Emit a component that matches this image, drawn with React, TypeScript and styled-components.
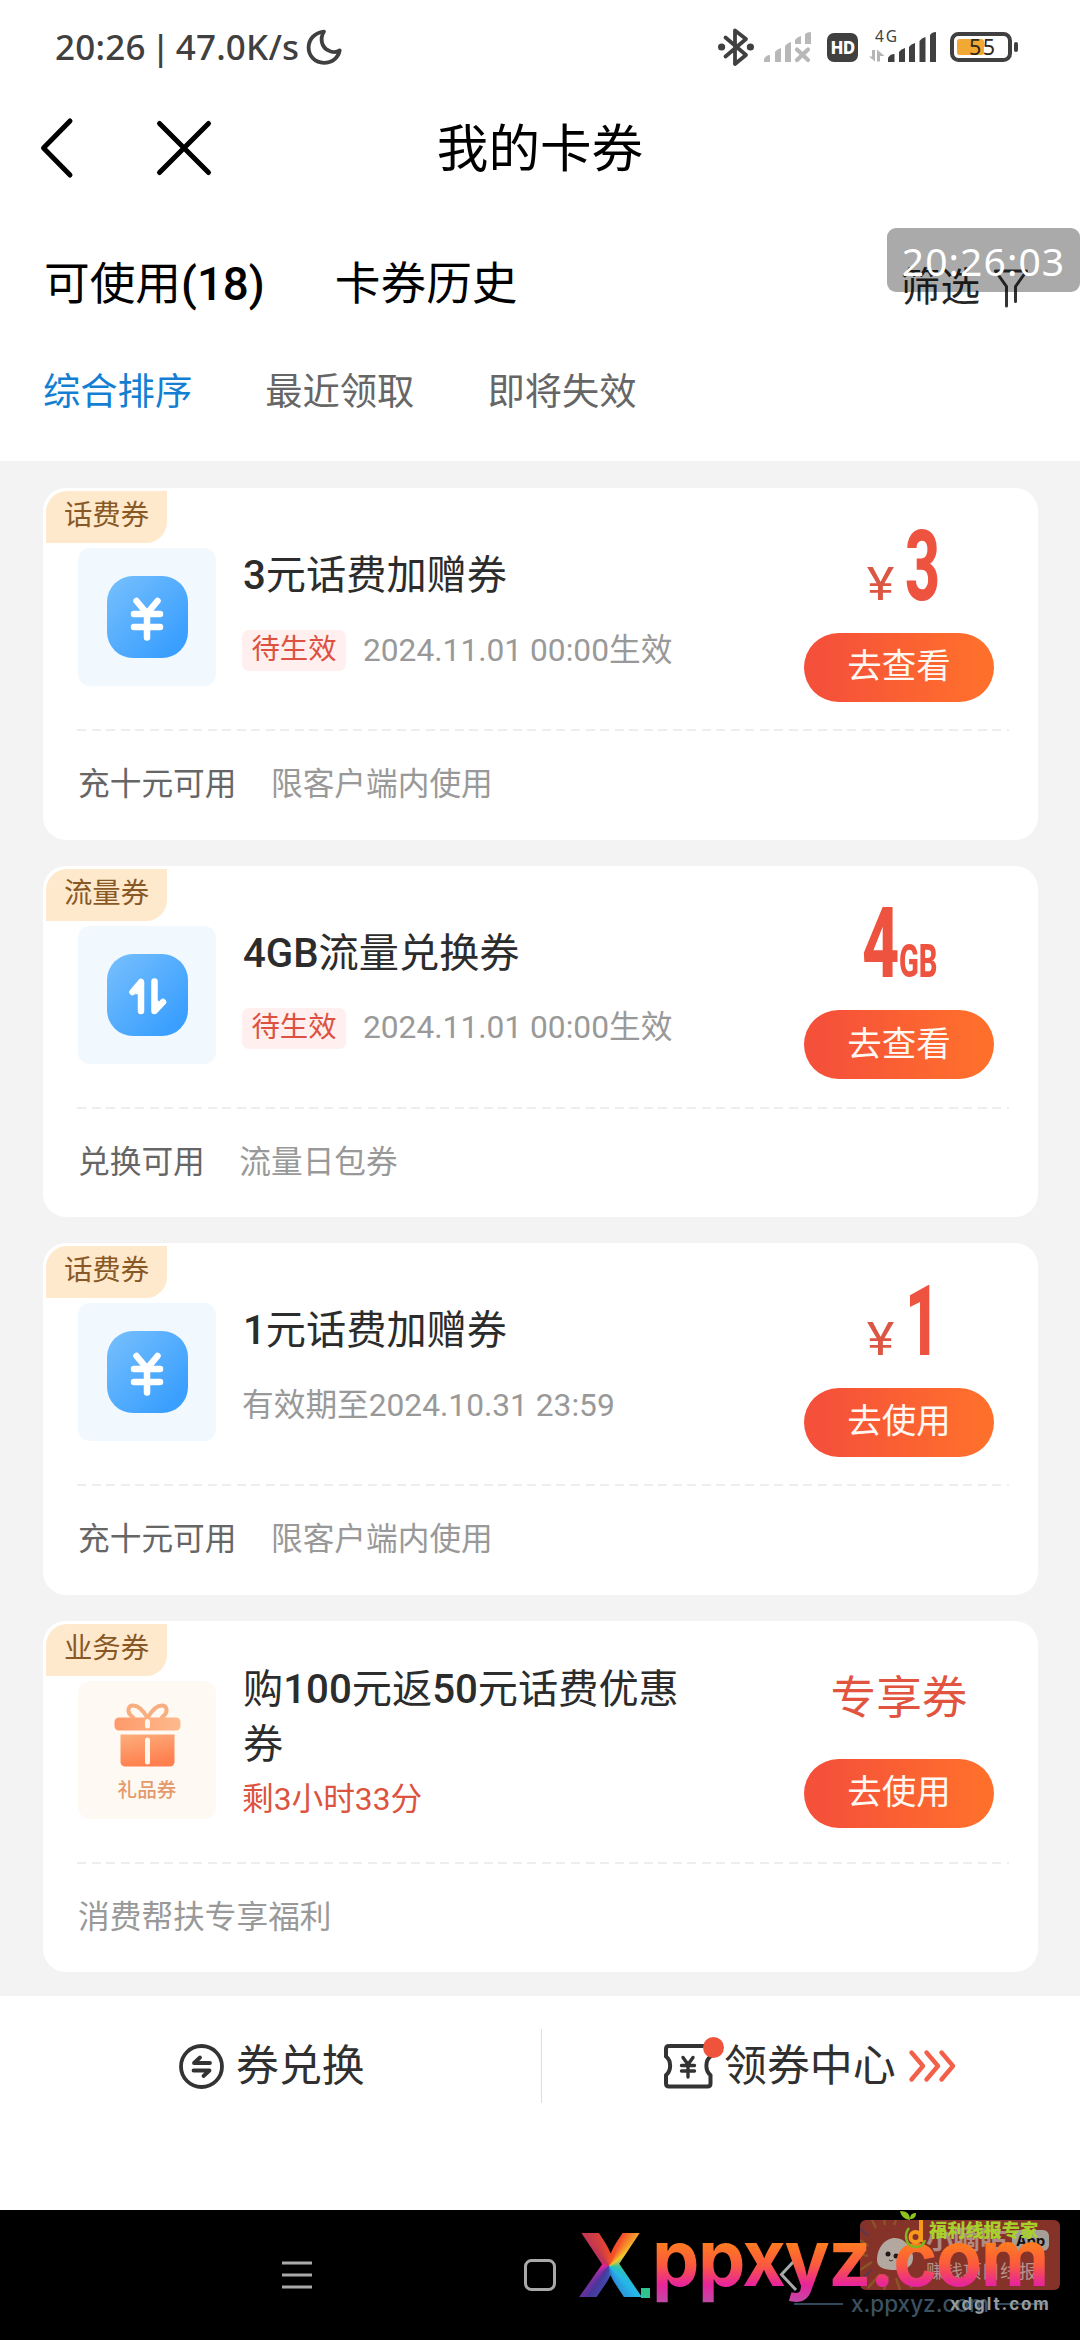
import React from "react";
import styled, { createGlobalStyle, css } from "styled-components";

const sans = `Roboto, "Noto Sans CJK SC", sans-serif`;
const system = `"Noto Sans", "Noto Sans CJK SC", sans-serif`;

const GlobalStyle = createGlobalStyle`
  * { box-sizing: border-box; }
  body { margin: 0; background: #fff; font-family: ${sans}; }
  svg { display: block; flex: none; overflow: visible; }
`;

const Screen = styled.div`
  position: relative;
  width: 1080px;
  height: 2340px;
  display: flex;
  flex-direction: column;
  background: #fff;
  overflow: hidden;
`;

/* ---------- status bar ---------- */

const StatusBar = styled.div`
  height: 94px;
  padding: 0 62px 0 55px;
  display: flex;
  align-items: center;
  color: #404040;
  font-family: ${system};
`;

const StatusText = styled.span`
  width: 251px;
  font-size: 35px;
  line-height: 94px;
  font-weight: 500;
  letter-spacing: 0.2px;
  word-spacing: -4px;
  white-space: nowrap;
`;

const StatusIcons = styled.div`
  margin-left: auto;
  display: flex;
  align-items: center;
`;

const Spacer = styled.span<{ $w: number }>`
  width: ${(p) => p.$w}px;
`;

const HdBadge = styled.span`
  width: 31px;
  height: 29px;
  border-radius: 7px;
  background: #404040;
  color: #fff;
  font-size: 17px;
  font-weight: 800;
  line-height: 29px;
  letter-spacing: -0.8px;
  text-align: center;
`;

/* ---------- header ---------- */

const Header = styled.header`
  height: 112px;
  display: grid;
  grid-template-columns: 300px 1fr 300px;
  align-items: center;
`;

const HeaderActions = styled.div`
  display: flex;
  align-items: center;
  gap: 85px;
  padding-left: 41px;
  margin-top: -5px;
`;

const Title = styled.h1`
  margin: 0;
  text-align: center;
  font-size: 51.6px;
  font-weight: 400;
  line-height: 112px;
  color: #000;
`;

const TabRow = styled.div`
  height: 136px;
  padding: 21px 52px 0 44px;
  display: flex;
  align-items: center;
`;

const Tab = styled.span<{ $gap?: number }>`
  margin-right: ${(p) => p.$gap ?? 0}px;
  font-size: 45.7px;
  line-height: 60px;
  color: #000;
  white-space: nowrap;
`;

const Strong = styled.b`
  font-weight: 500;
`;

const Filter = styled.div`
  margin-left: auto;
  display: flex;
  align-items: center;
  gap: 14px;
  padding-top: 6px;
  font-size: 39.6px;
  line-height: 52px;
  color: #262626;
`;

const FloatingClock = styled.div`
  position: absolute;
  top: 228px;
  right: 0;
  width: 193px;
  height: 64px;
  border-radius: 9px;
  background: rgba(0, 0, 0, 0.335);
  color: #fff;
  font-family: ${system};
  font-size: 39px;
  line-height: 65px;
  text-align: center;
  letter-spacing: 1.1px;
`;

const SortRow = styled.div`
  height: 119px;
  padding: 0 43px 19px;
  display: flex;
  align-items: center;
  gap: 73px;
`;

const SortItem = styled.span<{ $active?: boolean }>`
  font-size: 37.3px;
  line-height: 50px;
  color: ${(p) => (p.$active ? "#147fd2" : "#666")};
`;

/* ---------- coupons ---------- */

const List = styled.main`
  height: 1535px;
  padding: 27px 42px 0 43px;
  background: #f3f3f3;
  display: flex;
  flex-direction: column;
  gap: 26px;
`;

const Card = styled.article`
  position: relative;
  height: 351.5px;
  border-radius: 23px;
  background: #fff;
`;

const Tag = styled.span`
  position: absolute;
  left: 3px;
  top: 3px;
  width: 121px;
  height: 52px;
  border-radius: 21px 0 21px 0;
  background: #ffe9cd;
  color: #885926;
  font-size: 28.4px;
  line-height: 50px;
  text-align: center;
`;

const CardBody = styled.div`
  height: 241px;
  padding: 0 44px 0 35px;
  display: grid;
  grid-template-columns: 138px 1fr 190px;
`;

const IconTile = styled.div<{ $warm?: boolean }>`
  margin-top: 60px;
  width: 138px;
  height: 138px;
  padding-top: ${(p) => (p.$warm ? "9px" : "0")};
  border-radius: 12px;
  background: ${(p) => (p.$warm ? "#fff9f3" : "#f1f9fe")};
  display: flex;
  flex-direction: column;
  align-items: center;
  justify-content: center;
`;

const BlueSquare = styled.div`
  width: 81px;
  height: 82px;
  border-radius: 26px;
  background: linear-gradient(135deg, #74befd 5%, #3a9ffe 85%);
`;

const TileLabel = styled.span`
  margin-top: 10px;
  font-size: 19.6px;
  line-height: 28px;
  font-weight: 500;
  color: #e49a6c;
`;

const Info = styled.div<{ $tall?: boolean }>`
  padding: ${(p) => (p.$tall ? "42.5px 110px" : "61px 85px")} 0 27px;
  display: flex;
  flex-direction: column;
  gap: ${(p) => (p.$tall ? "7.5px" : "27px")};
`;

const Name = styled.h2`
  margin: 0;
  font-size: 40.2px;
  line-height: 54.5px;
  font-weight: 400;
  color: #2c2c2c;
  word-break: break-all;
`;

const Meta = styled.div<{ $urgent?: boolean }>`
  height: 40px;
  margin-left: -1px;
  display: flex;
  align-items: center;
  gap: 17px;
  font-size: 31.7px;
  line-height: 40px;
  color: ${(p) => (p.$urgent ? "#dc5340" : "#999")};
  white-space: nowrap;
`;

const Badge = styled.span`
  width: 104px;
  height: 41px;
  border-radius: 7px;
  background: #ffefee;
  color: #dd5141;
  font-size: 28.4px;
  line-height: 39px;
  text-align: center;
`;

const Side = styled.div`
  display: flex;
  flex-direction: column;
`;

const Amount = styled.div<{ $wordy?: boolean }>`
  display: flex;
  justify-content: center;
  align-items: baseline;
  color: #ee5340;
  ${(p) =>
    p.$wordy
      ? css`
          height: 138px;
          padding-top: 48px;
          font-size: 45.7px;
          line-height: 60px;
          color: #e15440;
        `
      : css`
          height: 144.5px;
          padding-top: 43.5px;
          line-height: 70px;
        `}
`;

const Yen = styled.span`
  display: inline-block;
  width: 29px;
  margin: 0 10px 0 9px;
  font-size: 46px;
  line-height: 46px;
  color: #dc5644;
  text-align: center;
  transform: scaleX(1.14);
`;

const Narrow = styled.span<{ $size: number; $w: number; $scale: number }>`
  display: inline-block;
  width: ${(p) => p.$w}px;
  font-size: ${(p) => p.$size}px;
  font-weight: 800;
  transform: scaleX(${(p) => p.$scale});
  transform-origin: left;
  white-space: nowrap;
`;

const ActionButton = styled.button`
  width: 190px;
  height: 69px;
  padding: 0 0 2px;
  border: 0;
  border-radius: 35px;
  background: linear-gradient(90deg, #f5503a 8%, #ff6f2c 92%);
  color: #fff8f2;
  font-family: ${sans};
  font-size: 34.5px;
  line-height: 60px;
`;

const Divider = styled.div`
  height: 2px;
  margin: 0 29px 0 34px;
  background: repeating-linear-gradient(90deg, #eee 0 9px, transparent 9px 14.53px);
`;

const Rules = styled.footer`
  height: 108px;
  padding-left: 35px;
  display: flex;
  align-items: center;
  gap: 34.5px;
  font-size: 31.7px;
  line-height: 44px;
`;

const Rule = styled.span<{ $strong?: boolean }>`
  color: ${(p) => (p.$strong ? "#666" : "#999")};
`;

/* ---------- bottom actions ---------- */

const BottomBar = styled.div`
  height: 214px;
  background: #fff;
  display: grid;
  grid-template-columns: 541px 1px 1fr;
  align-items: start;
`;

const BottomItem = styled.div<{ $left: number; $gap: number }>`
  height: 140px;
  padding-left: ${(p) => p.$left}px;
  display: flex;
  align-items: center;
  gap: ${(p) => p.$gap}px;
  font-size: 42.9px;
  line-height: 60px;
  color: #303030;
`;

const BottomSplit = styled.span`
  margin-top: 33px;
  height: 74px;
  background: #dedede;
`;

const BottomText = styled.span`
  padding-bottom: 1px;
  white-space: nowrap;
`;

/* ---------- navigation bar and stamps ---------- */

const NavBar = styled.nav`
  position: relative;
  height: 130px;
  background: #000;
  display: flex;
  padding: 49px 0 0 282px;
`;

const NavIcon = styled.div<{ $w: number; $after: number }>`
  width: ${(p) => p.$w}px;
  margin-right: ${(p) => p.$after}px;
`;

const Promo = styled.div`
  position: absolute;
  left: 860px;
  top: 10px;
  width: 200px;
  height: 70px;
  border-radius: 6px;
  overflow: hidden;
  background: #853328;
`;

const PromoName = styled.span`
  position: absolute;
  left: 66px;
  top: 5px;
  font-size: 27px;
  line-height: 30px;
  font-weight: 700;
  color: #b08a84;
  white-space: nowrap;
`;

const PromoApp = styled.span`
  position: absolute;
  left: 152px;
  top: 10px;
  width: 37px;
  height: 21px;
  border-radius: 6px;
  background: #a69f97;
  color: #17110f;
  font: 700 14.5px/22px Inter, sans-serif;
  text-align: center;
`;

const PromoLine = styled.span`
  position: absolute;
  left: 66px;
  top: 40px;
  font-size: 18.5px;
  line-height: 24px;
  color: #b7948f;
  white-space: nowrap;
`;

const BigX = styled.span`
  position: absolute;
  left: 577px;
  top: 15px;
  width: 64px;
  height: 80px;
  font: 800 88px/80px Inter, sans-serif;
  color: transparent;
  background: conic-gradient(from 0deg at 32px 41px, #ee4a28, #f5502a 24deg, #f7c52b 52deg, #31c6a2 95deg, #25b8e8 135deg, #2b8fd8 160deg, #3b4fae 185deg, #4a359b 215deg, #b02aa7 245deg, #e72290 275deg, #bc3457 315deg, #ee4a28);
  -webkit-background-clip: text;
  background-clip: text;
`;

const GreenDot = styled.span`
  position: absolute;
  left: 641px;
  top: 78px;
  width: 9px;
  height: 10px;
  background: #2fc38d;
`;

const SiteName = styled.span`
  position: absolute;
  left: 652px;
  top: 8px;
  width: 424px;
  height: 90px;
  font: 700 78px/80px Inter, sans-serif;
  letter-spacing: -1.6px;
  white-space: nowrap;
  color: transparent;
  background: linear-gradient(180deg, #ff7a22 29%, #fb5a3d 52%, #e8249a 74%, #b256a8 100%);
  -webkit-background-clip: text;
  background-clip: text;
  transform: scaleX(0.965);
  transform-origin: left;
`;

const StampTitle = styled.span`
  position: absolute;
  left: 929px;
  top: 7px;
  font: 900 18.2px/24px "Noto Sans CJK SC", sans-serif;
  color: #a8d02a;
  white-space: nowrap;
`;

const SmallSite = styled.div`
  position: absolute;
  left: 794px;
  top: 79px;
  width: 252px;
  height: 30px;
  display: flex;
  align-items: center;
  gap: 8px;
  color: #3c5160;
  font: 500 22.5px/30px Inter, sans-serif;
  white-space: nowrap;
`;

const Rail = styled.i`
  width: 49px;
  height: 2px;
  background: #31475a;
`;

const StampSite = styled.span`
  position: absolute;
  left: 950px;
  top: 82px;
  font: 700 17px/24px Inter, sans-serif;
  letter-spacing: 1.9px;
  color: #969b9e;
  white-space: nowrap;
`;

const StampArt = styled.svg`
  position: absolute;
  left: 898px;
  top: 0;
`;

/* ---------- icons ---------- */

const MoonIcon = () => (
  <svg width="36" height="36" viewBox="0 0 36 36" fill="none" stroke="#404040" strokeWidth="3.8" strokeLinejoin="round">
    <path d="M18 2.6C8.500 3.800 2.600 10 2.600 18.600c0 8.700 6.700 15.200 15.200 15.200 8.100 0 14.600-4.900 15.900-12.400-2.900 1.900-7.300 2.100-11 .2C15.400 18.300 13.600 9.500 18 2.600Z" />
  </svg>
);

const BluetoothIcon = () => (
  <svg width="36" height="38" viewBox="0 0 36 38" fill="none" stroke="#404040" strokeWidth="3.8" strokeLinejoin="round" strokeLinecap="round">
    <path d="M7.500 9.500 28 27 17 36V2.500l11 8.500L7.500 28.500" />
    <circle cx="3.600" cy="19" r="3.600" fill="#404040" stroke="none" />
    <circle cx="32.400" cy="19" r="3.600" fill="#404040" stroke="none" />
  </svg>
);

const NoSignalIcon = () => (
  <svg width="47" height="30" viewBox="0 0 47 30" fill="#b8b8b8">
    <path d="M0 30v-3q2-4 6-4v7ZM11 30V20q2-3 6-4v14ZM21 30V14q2-3 6-4v20ZM31 12V8q2-3 6-4v8ZM41 12V2q2-2 6-2v12Z" />
    <path d="m33 17.500 11 10.500M44 17.500 33 28" stroke="#b8b8b8" strokeWidth="4.200" strokeLinecap="round" />
  </svg>
);

const MobileSignalIcon = () => (
  <svg width="67" height="30" viewBox="0 0 67 30" fill="#404040">
    <text x="6" y="9.500" fontSize="15.500" fontFamily="Noto Sans" textLength="22">4G</text>
    <path d="M19 30v-4q2-4 6.500-4v8ZM30 30V20q2-3 6-4v14ZM40 30V15q2-3 6-4v19ZM50.500 30V9q2-3 6-4v25ZM61 30V3q2-3 6-3v30Z" />
    <path d="M0 24.500h3V18h3v11.500ZM8 17.500 15.500 24H11v5.500H8Z" fill="#b5b5b5" />
  </svg>
);

const BatteryIcon = () => (
  <svg width="68" height="30" viewBox="0 0 68 30">
    <rect x="2" y="2" width="58" height="26" rx="6.500" fill="none" stroke="#404040" strokeWidth="4" />
    <rect x="7" y="7" width="27" height="16" rx="2.500" fill="#f2a934" />
    <rect x="64" y="10" width="4" height="10" rx="2" fill="#404040" />
    <text x="19" y="22.500" fontSize="21.500" fontFamily="Noto Sans" fill="#30281c" textLength="26">55</text>
  </svg>
);

const BackIcon = () => (
  <svg width="31" height="60" viewBox="0 0 31 60" fill="none" stroke="#000" strokeWidth="5" strokeLinecap="round" strokeLinejoin="round">
    <path d="M29 3 2.500 30 29 57" />
  </svg>
);

const CloseIcon = () => (
  <svg width="54" height="54" viewBox="0 0 54 54" fill="none" stroke="#000" strokeWidth="5" strokeLinecap="round">
    <path d="m2.500 2.500 49 49M51.500 2.500l-49 49" />
  </svg>
);

const FunnelIcon = () => (
  <svg width="34" height="38" viewBox="0 0 34 38" fill="none" stroke="#333" strokeWidth="3" strokeLinecap="round" strokeLinejoin="round">
    <path d="M12.500 37V17.500L1.500 2h31L21.500 17.500V32.500" />
  </svg>
);

const YenGlyph = () => (
  <svg width="81" height="82" viewBox="0 0 81 81" fill="none" stroke="#fff" strokeWidth="6.500" strokeLinecap="round" strokeLinejoin="round">
    <path d="M29.500 24.500 40 37l10.500-12.500M27 37.500h26M27 50.500h26M40 37v24" />
  </svg>
);

const TransferGlyph = () => (
  <svg width="81" height="82" viewBox="0 0 81 81" fill="none" stroke="#fff" strokeWidth="6.500" strokeLinecap="round" strokeLinejoin="round">
    <path d="M25.500 37.500 34 27.500v29" />
    <path d="M34 29v10l-6 1Z" fill="#fff" stroke="none" />
    <path d="M47.500 27v29.500l8.500-9" />
    <path d="M48 43v12l6-6Z" fill="#fff" stroke="none" />
  </svg>
);

const GiftIcon = () => (
  <svg width="67" height="64" viewBox="0 0 67 64">
    <defs>
      <linearGradient id="giftBox" x1="0" y1="0" x2="0.300" y2="1">
        <stop offset="0" stopColor="#fcae7c" />
        <stop offset="1" stopColor="#ff7f4f" />
      </linearGradient>
      <linearGradient id="giftLid" x1="0" y1="0" x2="1" y2="0">
        <stop offset="0" stopColor="#ff996b" />
        <stop offset="1" stopColor="#fdba8d" />
      </linearGradient>
    </defs>
    <path d="M33.500 15C29 7 24 2.500 19 2.500c-4.500 0-6 5-3 9l4 4M33.500 15C38 7 43 2.500 48 2.500c4.500 0 6 5 3 9l-4 4" fill="none" stroke="#f7ae80" strokeWidth="4" />
    <rect x="0.500" y="14.500" width="66" height="13" rx="4.500" fill="url(#giftLid)" />
    <path d="M6.500 31.500h54V59a4.500 4.500 0 0 1-4.500 4.500H11A4.500 4.500 0 0 1 6.500 59Z" fill="url(#giftBox)" />
    <path d="M33.500 18.500v4.500M33.500 37v22" stroke="#fff6ee" strokeWidth="5" strokeLinecap="round" />
  </svg>
);

const ExchangeIcon = () => (
  <svg width="45" height="45" viewBox="0 0 45 45" fill="none" stroke="#333" strokeWidth="3.800" strokeLinecap="round" strokeLinejoin="round">
    <circle cx="22.500" cy="22.500" r="20.500" />
    <path d="M31 19H15l6-5.500M14.500 26.500h16l-6 5.500" />
  </svg>
);

const TicketIcon = () => (
  <svg width="60" height="52" viewBox="0 0 60 52" fill="none" stroke="#333" strokeWidth="4" strokeLinecap="round" strokeLinejoin="round">
    <path d="M5 6h38.500q3 0 3 3v7.500c-5.500 4-5.500 14.500 0 18.500v8.500q0 3-3 3H5q-3 0-3-3V35c5.500-4 5.500-14.500 0-18.500V9q0-3 3-3Z" />
    <path d="m19 17.500 5 7 5-7M17.500 25.500h13M17.500 31h13M24 25v12" strokeWidth="3.400" />
    <circle cx="49.500" cy="7.500" r="10.500" fill="#f0533c" stroke="none" />
  </svg>
);

const TripleChevron = () => (
  <svg width="48" height="32" viewBox="0 0 48 32" fill="none" stroke="#f2604a" strokeWidth="4.400" strokeLinecap="round" strokeLinejoin="round">
    <path d="M2.500 2.500 14 16 2.500 29.500M17.500 2.500 29 16 17.500 29.500M32.500 2.500 44 16 32.500 29.500" />
  </svg>
);

/* ---------- data ---------- */

type Kind = "yen" | "transfer" | "gift";

interface Coupon {
  tag: string;
  kind: Kind;
  name: string;
  pending?: boolean;
  meta: string;
  amount: string;
  unit: "yen" | "gb" | "text";
  action: string;
  condition?: string;
  note: string;
}

const coupons: Coupon[] = [
  { tag: "话费券", kind: "yen", name: "3元话费加赠券", pending: true, meta: "2024.11.01 00:00生效", amount: "3", unit: "yen", action: "去查看", condition: "充十元可用", note: "限客户端内使用" },
  { tag: "流量券", kind: "transfer", name: "4GB流量兑换券", pending: true, meta: "2024.11.01 00:00生效", amount: "4", unit: "gb", action: "去查看", condition: "兑换可用", note: "流量日包券" },
  { tag: "话费券", kind: "yen", name: "1元话费加赠券", meta: "有效期至2024.10.31 23:59", amount: "1", unit: "yen", action: "去使用", condition: "充十元可用", note: "限客户端内使用" },
  { tag: "业务券", kind: "gift", name: "购100元返50元话费优惠券", meta: "剩3小时33分", amount: "专享券", unit: "text", action: "去使用", note: "消费帮扶专享福利" },
];

/* Latin letters and digits are set heavier than the Chinese characters. */
const Mixed = ({ text }: { text: string }) => (
  <>
    {text.split(/([0-9A-Za-z()]+)/).map((part, i) =>
      i % 2 ? <Strong key={i}>{part}</Strong> : <React.Fragment key={i}>{part}</React.Fragment>
    )}
  </>
);

const CouponIcon = ({ kind }: { kind: Kind }) =>
  kind === "gift" ? (
    <IconTile $warm>
      <GiftIcon />
      <TileLabel>礼品券</TileLabel>
    </IconTile>
  ) : (
    <IconTile>
      <BlueSquare>{kind === "yen" ? <YenGlyph /> : <TransferGlyph />}</BlueSquare>
    </IconTile>
  );

const CouponAmount = ({ amount, unit }: Pick<Coupon, "amount" | "unit">) => {
  if (unit === "text") return <Amount $wordy>{amount}</Amount>;
  return (
    <Amount>
      {unit === "yen" && <Yen>¥</Yen>}
      <Narrow $size={98} $w={37} $scale={unit === "gb" ? 0.66 : 0.62}>{amount}</Narrow>
      {unit === "gb" && <Narrow $size={47} $w={37} $scale={0.62}>GB</Narrow>}
    </Amount>
  );
};

const CouponCard = ({ c }: { c: Coupon }) => {
  const tall = c.kind === "gift";
  return (
    <Card>
      <Tag>{c.tag}</Tag>
      <CardBody>
        <CouponIcon kind={c.kind} />
        <Info $tall={tall}>
          <Name>
            <Mixed text={c.name} />
          </Name>
          <Meta $urgent={tall}>
            {c.pending && <Badge>待生效</Badge>}
            <span>{c.meta}</span>
          </Meta>
        </Info>
        <Side>
          <CouponAmount amount={c.amount} unit={c.unit} />
          <ActionButton>{c.action}</ActionButton>
        </Side>
      </CardBody>
      <Divider />
      <Rules>
        {c.condition && <Rule $strong>{c.condition}</Rule>}
        <Rule>{c.note}</Rule>
      </Rules>
    </Card>
  );
};

export default function App() {
  return (
    <Screen>
      <GlobalStyle />
      <StatusBar>
        <StatusText>20:26 | 47.0K/s</StatusText>
        <MoonIcon />
        <StatusIcons>
          <BluetoothIcon />
          <Spacer $w={10} />
          <NoSignalIcon />
          <Spacer $w={16} />
          <HdBadge>HD</HdBadge>
          <Spacer $w={11} />
          <MobileSignalIcon />
          <Spacer $w={14} />
          <BatteryIcon />
        </StatusIcons>
      </StatusBar>

      <Header>
        <HeaderActions>
          <BackIcon />
          <CloseIcon />
        </HeaderActions>
        <Title>我的卡券</Title>
      </Header>

      <TabRow>
        <Tab $gap={70}>
          <Mixed text="可使用(18)" />
        </Tab>
        <Tab>卡券历史</Tab>
        <Filter>
          筛选
          <FunnelIcon />
        </Filter>
      </TabRow>
      <FloatingClock>20:26:03</FloatingClock>

      <SortRow>
        <SortItem $active>综合排序</SortItem>
        <SortItem>最近领取</SortItem>
        <SortItem>即将失效</SortItem>
      </SortRow>

      <List>
        {coupons.map((c) => (
          <CouponCard key={c.name} c={c} />
        ))}
      </List>

      <BottomBar>
        <BottomItem $left={179} $gap={12}>
          <ExchangeIcon />
          <BottomText>券兑换</BottomText>
        </BottomItem>
        <BottomSplit />
        <BottomItem $left={122} $gap={0}>
          <TicketIcon />
          <BottomText>领券中心</BottomText>
          <Spacer $w={13} />
          <TripleChevron />
        </BottomItem>
      </BottomBar>

      <NavBar>
        <NavIcon $w={30} $after={212}>
          <svg width="30" height="32" viewBox="0 0 30 32" stroke="#a9a9a9" strokeWidth="3">
            <path d="M0 4h30M0 16h30M0 28h30" />
          </svg>
        </NavIcon>
        <NavIcon $w={32} $after={223}>
          <svg width="32" height="32" viewBox="0 0 32 32" fill="none" stroke="#a9a9a9" strokeWidth="3">
            <rect x="1.500" y="1.500" width="29" height="29" rx="6" />
          </svg>
        </NavIcon>
        <NavIcon $w={18} $after={0}>
          <svg width="18" height="32" viewBox="0 0 18 32" fill="none" stroke="#a9a9a9" strokeWidth="3">
            <path d="M17 0 2.500 15.500 17 31" />
          </svg>
        </NavIcon>

        <Promo>
          <svg width="60" height="70" viewBox="0 0 60 70" fill="none">
            <path d="M12 0 16 8M24 0l1 5M36 0l-2 5M0 20l8 6M0 34l8 2M0 50l12-8M8 68l12-14M24 70l4-14M40 70l-4-12M52 68l-8-12" stroke="#8a5428" strokeWidth="2.500" />
            <path d="M0 8 8 16M0 60l12-10" stroke="#5b3658" strokeWidth="2" />
            <path d="M17 40c0-12 8-22 18-22s18 11 18 20-8 12-18 12-18-2-18-10Z" fill="#b3a8a0" />
            <circle cx="28" cy="34" r="2.500" fill="#231a18" />
            <circle cx="36" cy="36" r="2.500" fill="#231a18" />
            <path d="M29 40q2 2 4 0" stroke="#47302c" />
          </svg>
          <PromoName>小嘀咕</PromoName>
          <PromoApp>App</PromoApp>
          <PromoLine>赚钱项目线报</PromoLine>
        </Promo>
        <BigX>X</BigX>
        <GreenDot />
        <SiteName>ppxyz.com</SiteName>
        <StampArt width="30" height="40" viewBox="0 0 30 40" fill="none">
          <path d="M2 1c7 0 10 3 10 9C6 9 3 6 2 1ZM12 9c0-4 2-6 6-6 0 4-2 6-6 6Z" fill="#8fc31f" />
          <path d="M11 18c-5 6-4 19 7 19 5 0 8-3 9-7" stroke="#7fb51e" strokeWidth="2.500" />
          <circle cx="17.500" cy="27" r="5" stroke="#f79a1c" strokeWidth="4" />
          <path d="M23 10v22" stroke="#f79a1c" strokeWidth="4" />
        </StampArt>
        <StampTitle>福利线报专家</StampTitle>
        <SmallSite>
          <Rail />
          x.ppxyz.com
          <Rail />
        </SmallSite>
        <StampSite>xdglt.com</StampSite>
      </NavBar>
    </Screen>
  );
}
